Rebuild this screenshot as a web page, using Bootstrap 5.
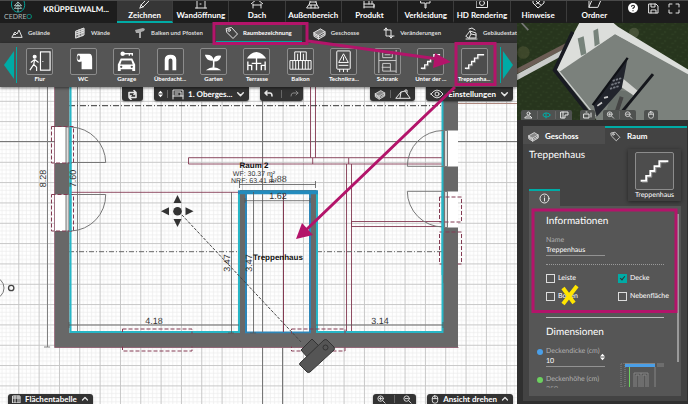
<!DOCTYPE html>
<html lang="de">
<head>
<meta charset="utf-8">
<meta name="viewport" content="width=device-width, initial-scale=1">
<title>CEDREO – Zeichnen</title>
<link href="https://cdn.jsdelivr.net/npm/bootstrap@5.3.0/dist/css/bootstrap.min.css" rel="stylesheet">
<style>
:root{--teal:#00aba5;--pink:#b3146a}
body{font-family:Lato,"Open Sans",sans-serif;font-size:7px;line-height:10px;color:#fff;background:#2b2b2b;text-rendering:geometricPrecision}
button{font:inherit;color:inherit;background:none;border:0;padding:0}
svg{display:block;flex:none}
.ic{fill:none;stroke:#e6e6e6;stroke-width:1;stroke-linecap:round;stroke-linejoin:round}
.topbar{height:23px;background:#1d1d1d;border-top:1px solid #4a4a4a}
.brand{width:117px}
.brand-word{font-size:7px;line-height:8px;color:#aeb8b7}
.brand-word b{color:var(--teal);font-weight:400}
.project{font-size:8px;font-weight:700;line-height:16px}
.toptab{font-size:8px;font-weight:700;line-height:12px;flex:1 1 0;border-right:1px solid #3c3c3c;border-bottom:2px solid transparent;min-width:0;height:22px;white-space:nowrap}
.toptab.active{background:#363636;border-bottom-color:var(--teal)}
.tools{width:65px}
.leftcol{min-width:0}
.subnav{height:20px;background:#333}
.subnav button{height:20px;font-size:6px;font-weight:700;color:#dcdcdc;white-space:nowrap;padding-left:11px;padding-right:13px;gap:5px}
.subnav button.active{background:#444;color:#fff;border-bottom:1px solid var(--teal);height:17px;padding-left:9px;padding-right:10px;gap:4px}
.palette{height:44px;background:#555;box-shadow:0 1px 3px #0008;z-index:2}
.item{flex:1 1 0;font-size:6px;font-weight:700;line-height:8px;min-width:0;white-space:nowrap}
.tile{width:27px;height:27px;border:1px solid #8c8c8c;border-radius:2px;background:#4d4d4d}
.stage{min-height:0;background:#fdfdfd}
.plan{width:100%;height:100%}
.plan text{font-family:"Liberation Sans",Arial,sans-serif;font-size:9px;fill:#333}
.pill{background:#333;height:14px;font-size:8px;font-weight:700;box-shadow:0 1px 2px #0006;white-space:nowrap}
.pill.dn{border-radius:0 0 3px 3px}.pill.up{border-radius:3px 3px 0 0;height:10px;overflow:hidden;line-height:12px}
.pill.gapped{margin-left:11px}
.sep{width:1px;height:8px;background:#666}
.side{width:171px;background:#303030}
.view3d{height:97px;overflow:hidden;background:#26331c}
.viewbtns{gap:8px;left:4px;bottom:0}
.viewbtns>span{background:#4f5250;border-radius:2px 2px 0 0;height:10px;padding:0 3px}
.panel{background:#434343;margin:6px 1px 3px 6px;min-height:0}
.ptab{height:18px;font-size:8px;font-weight:700;flex:1 1 0;background:#4d4d4d;gap:6px;padding-left:5px;border-top:2px solid transparent}
.ptab.active{background:#434343;border-top-color:var(--teal)}
.headrow{height:45px;padding:5px 6px 0 6px}
.ttl{font-size:10px;font-weight:400;line-height:12px}
.preview{width:53px;height:52px;background:#404040;box-shadow:0 1px 4px #0007;position:relative;z-index:2;padding-top:3px;line-height:10px}
.preview .tile{width:39px;height:38px}
.infotab{width:31px;height:17px;background:#565656;border-top:2px solid var(--teal);margin-left:6px}
.pbody{background:#565656;margin:0 6px 5px 6px;min-height:0;overflow:hidden;padding:8px 17px 0 17px;border-bottom:8px solid #565656}
.pbody h2{font-size:10px;line-height:14px;font-weight:400;margin:0}
.fld{width:59px;background:none;border:0;border-bottom:1px solid #929292;color:#fff;padding:0;font-size:7px;line-height:9px;height:11px;border-radius:0;display:block;text-rendering:inherit}
.fld.dim{color:#999}
.lbl{color:#b0b0b0;display:block;line-height:9px}
.ck{appearance:none;width:9px;height:9px;border:1px solid #ddd;margin:0;flex:none;position:relative}
.ck:checked{background:var(--teal);border-color:var(--teal)}
.ck:checked::after{content:"";position:absolute;left:2px;top:0;width:3px;height:5px;border:solid #333;border-width:0 1px 1px 0;transform:rotate(40deg)}
.checks{display:grid;grid-template-columns:72px 1fr;row-gap:8px;padding-top:8px}
.checks label{display:flex;align-items:center;gap:3px;height:10px;white-space:nowrap}
.dots{border-top:1px dotted #999;margin-top:8px}
.rule{height:1px;background:#bbb;margin:16px 0 7px}
.scroll{width:2px;height:148px;background:#9a9a9a;right:2px;top:8px}
.dot{width:6px;height:6px;border-radius:50%;left:-9px;top:2px}
.spinner{right:0;top:6px}
.notes{inset:0;pointer-events:none;z-index:10}
</style>
<script src="https://cdn.jsdelivr.net/npm/bootstrap@5.3.0/dist/js/bootstrap.bundle.min.js"></script>
</head>
<body class="vh-100 overflow-hidden d-flex flex-column position-relative">
<svg width="0" height="0" class="position-absolute" aria-hidden="true">
<defs>
<symbol id="stairs" viewBox="0 0 26 26"><path d="M3 20h4v-3.500h3v-3.500h3v-3.500h3.500v-3.500h6.500" fill="none" stroke="#fff" stroke-width="1.400"/><path d="M4 21h4v-3.500h3v-3.500h3v-3.500h3.500v-3.500h4" fill="none" stroke="#aaa" stroke-width=".5"/></symbol>
<symbol id="tag" viewBox="0 0 14 14"><path d="M1.500 2.500l5-1 6 6.500-4.500 4.500-6-6z"/><circle cx="4.200" cy="4.200" r="1.200"/></symbol>
<symbol id="box" viewBox="0 0 14 14"><path d="M1 6l7-4 5 3-7 4zM1 6v4l5 3V9M13 5v4l-7 4" fill="#888"/><path d="M1 8l5 3 7-4"/></symbol>
<symbol id="zin" viewBox="0 0 10 10"><circle cx="4" cy="4" r="3"/><path d="M6.500 6.500L9 9M2.500 4h3M4 2.500v3"/></symbol>
<symbol id="zout" viewBox="0 0 10 10"><circle cx="4" cy="4" r="3"/><path d="M6.500 6.500L9 9M2.500 4h3"/></symbol>
<symbol id="chev" viewBox="0 0 8 6"><path d="M1.500 1.500L4 4l2.500-2.500" stroke-width="1.300"/></symbol>
<symbol id="chevup" viewBox="0 0 8 6"><path d="M1.500 4L4 1.500 6.500 4" stroke-width="1.300"/></symbol>
<symbol id="spin" viewBox="0 0 6 8"><path d="M0 3.300L3 0l3 3.300zM0 4.700L3 8l3-3.300z" fill="#fff" stroke="none"/></symbol>
<symbol id="mouse" viewBox="0 0 8 10"><rect x="1" y="1" width="6" height="8" rx="2.500"/><path d="M1 4h6M4 1v3"/></symbol>
</defs>
</svg>

<header class="topbar d-flex flex-shrink-0 overflow-hidden">
 <div class="brand d-flex align-items-start">
  <div class="d-flex flex-column align-items-center ps-1">
   <svg width="16" height="12" viewBox="0 0 16 13" fill="none" stroke="#00aba5"><path d="M1.500 0C-.5 6 3 12 8 12s9-5 6.500-12"/><path d="M8 1v11M8 1l-4 4h8zM8 4L4 8h8z" stroke="#bfe2e0" stroke-width=".8"/></svg>
   <span class="brand-word">CEDRE<b>O</b></span>
  </div>
  <span class="project ms-auto me-2">KRÜPPELWALM...</span>
 </div>
 <nav class="d-flex flex-grow-1" aria-label="Bereiche">
  <button class="toptab active d-flex flex-column justify-content-end align-items-center"><svg class="ic" width="12" height="9"><path d="M1 8l1-3 6-6M1 8l3-1 6-6M2 5l2 2"/></svg>Zeichnen</button>
  <button class="toptab d-flex flex-column justify-content-end align-items-center"><svg class="ic" width="12" height="9"><path d="M0 8h12M2 8V-1M10 8V-1M5 4h1"/></svg>Wandöffnung</button>
  <button class="toptab d-flex flex-column justify-content-end align-items-center"><svg class="ic" width="12" height="9"><path d="M0 4l6-5 6 5M2 4v4M10 4v4M2 5h8"/></svg>Dach</button>
  <button class="toptab d-flex flex-column justify-content-end align-items-center"><svg class="ic" width="14" height="9"><path d="M1 8h12l-2-3H3zM3 5l1-3h6l1 3M5 5v3M9 5v3M4 2V0M10 2V0"/></svg>Außenbereich</button>
  <button class="toptab d-flex flex-column justify-content-end align-items-center"><svg class="ic" width="12" height="9"><path d="M1 8V0M1 7h10V4H1M6 4V0h3v4M11 8V5"/></svg>Produkt</button>
  <button class="toptab d-flex flex-column justify-content-end align-items-center"><svg class="ic" width="12" height="9"><path d="M1 0h9v3H6v5H5V3H1z"/></svg>Verkleidung</button>
  <button class="toptab d-flex flex-column justify-content-end align-items-center"><svg class="ic" width="12" height="9"><rect x=".5" y="-2" width="11" height="9.500"/><circle cx="6" cy="3" r="2.500"/></svg>HD Rendering</button>
  <button class="toptab d-flex flex-column justify-content-end align-items-center"><svg class="ic" width="13" height="9"><path d="M1 0v3l5 5 6-5V0M3 0l3 3 3-3M4 4l2-1 3 2"/></svg>Hinweise</button>
  <button class="toptab d-flex flex-column justify-content-end align-items-center"><svg class="ic" width="13" height="9"><path d="M1 7l3-7h9l-3 7zM1 7V0h3"/></svg>Ordner</button>
 </nav>
 <div class="tools d-flex align-items-center justify-content-between ps-1 pe-2 pb-2">
  <button aria-label="Hilfe"><svg width="12" height="12" viewBox="0 0 12 12"><circle cx="6" cy="6" r="5" fill="#fff"/><path d="M4.500 4.800q0-1.600 1.500-1.600t1.500 1.400q0 1-1.500 1.600v.7M6 8.200v1" fill="none" stroke="#222" stroke-width="1.100"/></svg></button>
  <button aria-label="Speichern"><svg class="ic" width="11" height="11" viewBox="0 0 11 11"><path d="M1 1h7l2 2v7H1zM3 1v3h4V1M3 10V7h5v3"/></svg></button>
  <button aria-label="Vollbild"><svg class="ic" width="12" height="11" viewBox="0 0 12 11"><path d="M1 4V1h3M8 1h3v3M11 7v3H8M4 10H1V7"/></svg></button>
 </div>
</header>

<div class="d-flex flex-grow-1" style="min-height:0">
<main class="leftcol d-flex flex-column flex-grow-1">
 <nav class="subnav d-flex align-items-center overflow-hidden flex-shrink-0" aria-label="Werkzeuge">
  <button class="d-flex align-items-center"><svg class="ic" width="12" height="9"><path d="M1 8l3-5 2 2 2-4 3 7zM3 5l1 1 1-1"/></svg>Gelände</button>
  <button class="d-flex align-items-center"><svg class="ic" width="12" height="12"><path d="M2 4l8-3v7l-8 3zM2 6l8-3M2 8l8-3M5 3v7M8 2v7" fill="#777"/></svg>Wände</button>
  <button class="d-flex align-items-center"><svg width="12" height="12"><path d="M1 3l8-2 2 1-1 2-3 1v6H5V6L2 6z" fill="#aaa"/></svg>Balken und Pfosten</button>
  <button class="active d-flex align-items-center"><svg class="ic" width="14" height="14"><use href="#tag"/></svg>Raumbezeichnung</button>
  <button class="d-flex align-items-center"><svg class="ic" width="13" height="13"><use href="#box"/></svg>Geschosse</button>
  <button class="d-flex align-items-center"><svg class="ic" width="12" height="12"><path d="M3 1v8h8M1 3h7v8M1.500 2.500L3 1l1.500 1.500M6.500 9.500L8 11l1.500-1.500"/></svg>Veränderungen</button>
  <button class="d-flex align-items-center"><svg class="ic" width="13" height="13"><path d="M1 9l4-5 6 2v5H4zM5 4l1 3 5 1M6 7l-2 4M4 2l3-1 3 2M1 12h11"/></svg>Gebäudestatik</button>
 </nav>
 <div class="palette d-flex align-items-center flex-shrink-0 position-relative">
  <button class="ps-1" aria-label="Zurück"><svg width="14" height="36"><path d="M0 18L10 4v28z" fill="#00aba5"/><path d="M12.500 0v36" stroke="#00aba5"/></svg></button>
  <div class="d-flex flex-grow-1" style="min-width:0">
   <button class="item d-flex flex-column align-items-center"><svg class="tile" viewBox="0 0 26 26" fill="none" stroke="#fff" stroke-width="1.200"><rect x="14" y="3" width="10" height="19"/><circle cx="8" cy="8" r="1.500" fill="#fff"/><path d="M8 11l-1 5 3 3v4M7 16l-4 6M8 11l-4 3M8 11l4 3M16 13h1"/></svg>Flur</button>
   <button class="item d-flex flex-column align-items-center"><svg class="tile" viewBox="0 0 26 26"><path d="M7 5h12q3 0 3 5v11H11V13q-5 2-5-4 0-3 1-4z" fill="#fff"/><ellipse cx="8" cy="9" rx="1.500" ry="2.500" fill="#555"/></svg>WC</button>
   <button class="item d-flex flex-column align-items-center"><svg class="tile" viewBox="0 0 26 26"><path d="M4 23v-7l3-6h12l3 6v7h-3v-2H7v2z" fill="#fff"/><path d="M8 12h10l1.500 4h-13z" fill="#555"/><circle cx="7.500" cy="18.500" r="1.200" fill="#555"/><circle cx="18.500" cy="18.500" r="1.200" fill="#555"/><path d="M10 5h9v2M16 5v2" stroke="#fff" stroke-width="1.500"/><circle cx="9" cy="5" r="2.300" fill="#fff"/></svg>Garage</button>
   <button class="item d-flex flex-column align-items-center"><svg class="tile" viewBox="0 0 26 26"><path d="M7 22V11q0-5 6-5t6 5v11h-4V12q0-2-2-2t-2 2v10z" fill="#fff"/></svg>Überdacht...</button>
   <button class="item d-flex flex-column align-items-center"><svg class="tile" viewBox="0 0 26 26"><path d="M5 22q8-6 16 0zM12 19q1-5 0-7-6 1-8-6 8-1 9 5 1-5 8-4-1 6-7 6 0 3 0 6z" fill="#fff"/></svg>Garten</button>
   <button class="item d-flex flex-column align-items-center"><svg class="tile" viewBox="0 0 26 26"><path d="M3 10q3-6 10-7 7 1 10 7z" fill="#fff"/><path d="M13 9v13M8 15h10M4 13v4h4v5M4 17v5M22 13v4h-4v5M22 17v5" fill="none" stroke="#fff" stroke-width="1.400"/></svg>Terrasse</button>
   <button class="item d-flex flex-column align-items-center"><svg class="tile" viewBox="0 0 26 26" fill="none" stroke="#fff"><path d="M7 12V3h12v9M13 3v9M10 5v7M16 5v7M2 12h22v9H2zM5 12v9M8 12v9M11 12v9M15 12v9M18 12v9M21 12v9"/></svg>Balkon</button>
   <button class="item d-flex flex-column align-items-center"><svg class="tile" viewBox="0 0 26 26" fill="none" stroke="#fff"><rect x="6" y="2" width="14" height="19" rx="1"/><path d="M13 5l5 9H8zM13 8v4M8 17h10M9 21v3M13 21v3M17 21v3"/></svg>Technikra...</button>
   <button class="item d-flex flex-column align-items-center"><svg class="tile" viewBox="0 0 26 26" fill="none" stroke="#ccc"><path d="M4 1v24M22 1v24M8 3h10v6H8zM4 12h18M8 15h8v8M8 15v8h14M10 6h6M7 19h9"/></svg>Schrank</button>
   <button class="item d-flex flex-column align-items-center"><svg class="tile"><use href="#stairs"/></svg>Unter der ...</button>
   <button class="item d-flex flex-column align-items-center"><svg class="tile"><use href="#stairs"/></svg>Treppenha...</button>
  </div>
  <button class="pe-1 ps-1" aria-label="Weiter"><svg width="13" height="36"><path d="M13 18L3 4v28z" fill="#00aba5"/><path d="M.5 0v36" stroke="#00aba5"/></svg></button>
 </div>

 <div class="stage flex-grow-1 position-relative overflow-hidden">
  <svg class="plan" viewBox="0 87 517 317" preserveAspectRatio="xMinYMin slice">
   <defs>
    <pattern id="grid" x="18.300" y="100.800" width="20.330" height="20.330" patternUnits="userSpaceOnUse">
     <path d="M4 0v21M8.100 0v21M12.200 0v21M16.300 0v21M0 4h21M0 8.100h21M0 12.200h21M0 16.300h21" stroke="#ebebeb" stroke-width=".7"/>
     <path d="M.5 0v21M0 .5h21" stroke="#c6c6c6"/>
    </pattern>
   </defs>
   <rect x="0" y="87" width="1600" height="1200" fill="#fff"/>
   <rect x="0" y="87" width="1600" height="1200" fill="url(#grid)"/>
   <path d="M0 141.500h517M262.500 87v317" stroke="#777"/><path d="M282.500 348v56" stroke="#777"/>
   <g stroke="#808080" fill="none"><path d="M47.500 87v260M44 347h6M77.500 87v246"/></g>
   <path d="M458 103.500h59" stroke="#b08a80"/>
   <g fill="none" stroke="#833a52" stroke-width=".9">
    <path d="M442 157.700H188.500v6.300H442M310.500 87v70.700M315.500 87v70.700M312.700 158v6M348.700 158v6M346.500 164v168M351.500 164v168M351 221.500h91M351 226.500h91M71 192.300h167M283.500 194v138M351.500 221v6"/>
   </g>
   <g fill="none"><path d="M69 105.700h374" stroke="#333" stroke-dasharray="6 2 1 2"/><path d="M69 251.700h170M317 251.700h126" stroke-dasharray="5 2 1 2" stroke="#666"/></g>
   <path d="M55 87h14.500v246H443V87h15v260.500H55z" fill="#686868"/>
   <path d="M54.500 87v260.500H458.500" fill="none" stroke="#8a5468" stroke-width=".8"/>
   <rect x="240" y="190" width="76.500" height="144" fill="#686868"/>
   <rect x="246" y="194" width="64" height="138" fill="#fff"/><rect x="246" y="194" width="64" height="138" fill="url(#grid)"/>
   <path d="M70.500 87v245H239V191M317 191v141h125.500V87" fill="none" stroke="#27b6c6" stroke-width="2"/>
   <path d="M238 192.300h80" stroke="#238bbd" stroke-width="4"/>
   <path d="M246 194v138.500h64V194" fill="none" stroke="#2c86b8" stroke-width="2"/>
   <path d="M262.500 194v138" stroke="#777"/><path d="M283.500 194v138" stroke="#833a52"/>
   <g stroke="#777" fill="#fff"><path d="M55 127h11v36H55zM55 194.500h11V231H55zM447.500 130.500h10.500v36h-10.500zM447.500 191.500h10.500v36h-10.500z" stroke="none"/><path d="M66 127h3v36h-3zM66 194.500h3V231h-3zM444.500 130.500h3v36h-3zM444.500 191.500h3v36h-3z" fill="#ddd"/>
    <path d="M70 162.500h35.700A36 36 0 0 0 71 127M70 194.500h35.700A36 36 0 0 1 71 231M443 166.300h-35.700A36 36 0 0 1 443 130.500M443 191.300h-35.700A36 36 0 0 0 443 227" fill="none"/></g>
   <path d="M51.500 126.500h22V163h-22zM51.500 194.500h22V231h-22zM439.500 197h22v25h-22zM439.500 232h22v32h-22zM122.500 329H192v22h-69.500zM291.500 329H345v22h-53.500z" fill="none" stroke="#833a52" stroke-dasharray="4 2"/>
   <path d="M70.500 127v104M442.500 191v84" stroke="#27b6c6" stroke-width="2"/>
   <path d="M56 333.500h401v13H56zM443.500 233h14v50h-14z" fill="#686868"/>
   <path d="M69 325h170M316 325h127M69 322v6M443 322v6M231.500 192v141M253.500 192v141M228 333h6M250 333h6M239.500 184.500h76M239.500 181v7M315.500 181v7M245 200.700h65M245 198v5M310 198v5" stroke="#555" stroke-width=".8"/>
   <path d="M182 215l120 128" stroke="#444" stroke-dasharray="3 1.500"/>
   <g fill="#333"><circle cx="177.500" cy="211.200" r="4.300"/><path d="M177.500 195l4 8h-8zM177.500 227l4-8h-8zM161 211.200l8-4v8zM193.500 211.200l-8-4v8z"/></g>
   <g stroke="#333" fill="#555"><path d="M301 350l11-11 8 8-12 11z"/><path d="M300 363l24-23q2-1 3 0l7 7q1 2 0 3l-24 22q-2 1-3 0l-7-7q-1-1 0-2z"/><circle cx="325.500" cy="347.500" r="2.500" fill="none"/></g>
   <g fill="none" stroke="#444"><circle cx="-7" cy="288" r="11" stroke="#777"/><circle cx="11.200" cy="288" r="2.700" stroke-width="1.300"/></g>
   <g text-anchor="middle">
    <text transform="translate(45.500 178.500) rotate(-90)">8.28</text><text transform="translate(76 178.500) rotate(-90)">7.60</text>
    <text transform="translate(230 263) rotate(-90)">3.47</text><text transform="translate(251.500 263) rotate(-90)">3.47</text>
    <text x="154" y="324">4.18</text><text x="380" y="324">3.14</text><text x="278" y="182">1.88</text><text x="278" y="199">1.62</text>
    <text x="254" y="168" style="font-size:8px;font-weight:700;fill:#111">Raum 2</text>
    <text x="254" y="176" style="font-size:7px">WF: 30.37 m²</text><text x="254" y="183" style="font-size:7px">NRF: 63.41 m²</text>
    <text x="278" y="260" style="font-size:8px;font-weight:700;fill:#111">Treppenhaus</text>
   </g>
  </svg>
  <div class="position-absolute top-0 start-0 w-100 d-flex align-items-start">
   <button class="pill dn px-1" style="margin-left:122px" aria-label="Wechseln"><svg class="ic" width="13" height="11" viewBox="0 0 13 10" style="stroke-width:1.600"><path d="M3 7V3h6M8 1l2 2-2 2M10 4v4H4M5 6L3 8l2 2"/></svg></button>
   <div class="pill dn gapped d-flex align-items-center gap-1 px-1"><svg width="5" height="8"><use href="#spin"/></svg><i class="sep"></i><svg class="ic" width="12" height="11"><path d="M1 10V1h10v9M1 7h10M3 3h6v4M3 5h3"/></svg><span>1. Oberges...</span><svg class="ic" width="9" height="7"><use href="#chev"/></svg></div>
   <div class="pill dn gapped d-flex align-items-center gap-2 px-1"><svg class="ic" width="9" height="8" style="stroke-width:1.600"><path d="M3 1L1 3l2 2M1 3h5q2 0 2 3"/></svg><i class="sep"></i><svg class="ic" width="9" height="8" style="stroke:#888"><path d="M6 1l2 2-2 2M8 3H3Q1 3 1 6"/></svg></div>
   <div class="pill dn d-flex align-items-center gap-1 px-1 ms-auto"><svg class="ic" width="12" height="11"><use href="#box"/></svg><i class="sep"></i><svg class="ic" width="16" height="10"><path d="M1 9l5-6 4-1 5 7zM6 3l-1 6M10 2v-1h2v3"/></svg></div>
   <button class="pill dn gapped d-flex align-items-center gap-1 px-1 me-1"><svg class="ic" width="14" height="10"><path d="M1 5q6-8 12 0-6 8-12 0z"/><circle cx="7" cy="5" r="2"/></svg>Einstellungen<svg class="ic" width="9" height="7"><use href="#chev"/></svg></button>
  </div>
  <div class="position-absolute bottom-0 start-0 w-100 d-flex align-items-end px-1">
   <button class="pill up d-flex align-items-center gap-1 px-1 ms-1"><svg class="ic" width="9" height="8"><path d="M1 1h7v7H1zM1 3h7M3 1v7M6 1v7"/></svg>Flächentabelle<svg class="ic" width="8" height="6"><use href="#chevup"/></svg></button>
   <div class="pill up d-flex align-items-center gap-2 px-1 ms-auto"><svg class="ic" width="9" height="9"><use href="#zin"/></svg><i class="sep"></i><svg class="ic" width="9" height="9"><use href="#zout"/></svg></div>
   <button class="pill up gapped d-flex align-items-center gap-1 px-1"><svg class="ic" width="8" height="9"><use href="#mouse"/></svg>Ansicht drehen<svg class="ic" width="8" height="6"><use href="#chevup"/></svg></button>
  </div>
 </div>
</main>

<aside class="side d-flex flex-column flex-shrink-0">
 <div class="view3d position-relative flex-shrink-0">
  <svg class="w-100 h-100" viewBox="351 68 513 292" preserveAspectRatio="xMidYMid slice">
   <defs><pattern id="grass" width="31" height="27" patternUnits="userSpaceOnUse"><rect width="31" height="27" fill="#27351d"/><path d="M2 5h7v4H2zM17 12h6v5h-6zM8 20h8v4H8zM25 2h4v5h-4z" fill="#2e3e23"/></pattern></defs>
   <rect x="351" y="68" width="513" height="292" fill="url(#grass)"/>
   <path d="M351 205L505 125l-6 18-148 78z" fill="#6c5d55"/><path d="M351 222l145-78-8 22-137 74z" fill="#c9cbc9"/>
   <path d="M365 68l20 22" stroke="#777" stroke-width="5"/>
   <circle cx="370" cy="157" r="19" fill="#4d5434" opacity=".6"/><circle cx="702" cy="98" r="15" fill="#5c6449" opacity=".6"/>
   <path d="M538 68h102l14 12 210 128v17L645 104 485 216l-20-8 32-64z" fill="#dcdedb"/>
   <path d="M645 102l219 120v138H590L475 217z" fill="#7b817c"/>
   <path d="M533 115l18-7 8 52-16 7zM580 92l14-7 5 46-15 8z" fill="#77837b"/>
   <path d="M518 95l-54 115 118 150" fill="none" stroke="#191b22" stroke-width="11"/><path d="M474 210l112 138" stroke="#cfd2cf" stroke-width="4"/>
   <path d="M640 268l60 8-30 84h-60z" fill="#69706b"/><path d="M665 232l48 40-12 14-44-30z" fill="#d4d5d2"/>
   <path d="M683 173L580 310l10 40 75-85z" fill="#21242c"/><path d="M683 173L578 315" stroke="#101217" stroke-width="7"/>
   <path d="M638 242l26-8M634 254l26-8M630 266l26-8" stroke="#777b83" stroke-width="5" stroke-dasharray="7 3"/><path d="M592 317l14-10M612 293l12-3" stroke="#ccc" stroke-width="5"/>
   <path d="M759 222L668 332" stroke="#15171c" stroke-width="9"/><path d="M665 290l-15 45" stroke="#444" stroke-width="12"/>
  </svg>
  <div class="viewbtns position-absolute d-flex">
   <span class="d-flex align-items-center gap-1"><svg class="ic" width="9" height="8"><circle cx="4.500" cy="2.500" r="1.500"/><path d="M1 7h7L6 5H3z"/></svg><i class="sep"></i><svg class="ic" width="9" height="8" style="stroke:#00aba5"><ellipse cx="4.500" cy="4" rx="3.500" ry="2"/><path d="M4 2v5"/></svg><i class="sep"></i><svg class="ic" width="9" height="8"><path d="M1 1h7v3H5v3H1zM3 1v6"/></svg></span>
   <span class="d-flex align-items-center"><svg class="ic" width="9" height="8"><rect x="1" y="3" width="5" height="4"/><path d="M3 1h1M8 2v4"/></svg></span>
   <span class="d-flex align-items-center gap-1"><svg class="ic" width="9" height="8"><use href="#zin"/></svg><i class="sep"></i><svg class="ic" width="9" height="8"><use href="#zout"/></svg></span>
   <span class="d-flex align-items-center"><svg class="ic" width="8" height="8"><use href="#mouse"/></svg></span>
  </div>
 </div>
 <section class="panel d-flex flex-column flex-grow-1">
  <div class="d-flex flex-shrink-0">
   <button class="ptab d-flex align-items-center"><svg class="ic" width="11" height="11"><use href="#box"/></svg>Geschoss</button>
   <button class="ptab active d-flex align-items-center"><svg class="ic" width="11" height="11"><use href="#tag"/></svg>Raum</button>
  </div>
  <div class="headrow d-flex justify-content-between align-items-start flex-shrink-0">
   <h1 class="ttl mb-0">Treppenhaus</h1>
   <div class="preview d-flex flex-column align-items-center"><svg class="tile"><use href="#stairs"/></svg>Treppenhaus</div>
  </div>
  <button class="infotab d-flex align-items-center justify-content-center flex-shrink-0" aria-label="Info"><svg class="ic" width="11" height="11"><circle cx="5.500" cy="5.500" r="4.500"/><path d="M5.500 5v3M5.500 3v.2"/></svg></button>
  <div class="pbody flex-grow-1 position-relative">
   <h2>Informationen</h2>
   <label class="lbl mt-2" for="nm">Name</label>
   <input class="fld" id="nm" value="Treppenhaus">
   <div class="dots"></div>
   <div class="checks">
    <label><input class="ck" type="checkbox">Leiste</label><label><input class="ck" type="checkbox" checked>Decke</label>
    <label><input class="ck" type="checkbox">Boden</label><label><input class="ck" type="checkbox">Nebenfläche</label>
   </div>
   <div class="rule"></div>
   <h2>Dimensionen</h2>
   <div class="d-flex justify-content-between pt-2">
    <div>
     <div class="position-relative"><i class="dot position-absolute" style="background:#4a9fe8"></i><label class="lbl" for="dd">Deckendicke (cm)</label>
      <input class="fld" id="dd" value="10"><svg class="spinner position-absolute" width="5" height="8"><use href="#spin"/></svg></div>
     <div class="position-relative mt-2"><i class="dot position-absolute" style="background:#6cd05f"></i><label class="lbl" for="dh">Deckenhöhe (cm)</label>
      <input class="fld dim" id="dh" value="250"></div>
    </div>
    <svg class="mt-3" width="44" height="24" viewBox="0 0 44 24" fill="none" stroke="#858585"><rect x="1" y="0" width="4" height="24" stroke-dasharray="1 1"/><path d="M35 4v20M37 1h7M37 3h7M5 .5h30M14 24V10h14v14M21 10v14M16 24V12h3v12M23 24V12h3v12"/><path d="M5 1h30v3H5z" fill="#4a9fe8" stroke="none"/><path d="M9.500 4v20" stroke="#6cd05f"/></svg>
   </div>
   <i class="scroll position-absolute"></i>
  </div>
 </section>
</aside>
</div>

<svg class="notes position-absolute" width="688" height="404" viewBox="0 0 688 404" fill="none" stroke="#b3146a" stroke-width="3" aria-hidden="true">
 <rect x="214" y="23.500" width="93" height="20"/><rect x="456" y="43.500" width="39" height="41"/><rect x="533" y="210" width="143" height="101.500"/>
 <path d="M308 41l130 18M455 87L306 230"/>
 <path d="M451 62l-18 6 2-15zM296 239l6-16 11 12z" fill="#b3146a" stroke="none"/>
 <path d="M563 288l11 15M577 286l-14 18" stroke="#ffe500" stroke-width="4"/>
</svg>
</body>
</html>
